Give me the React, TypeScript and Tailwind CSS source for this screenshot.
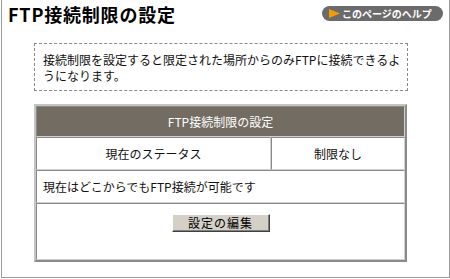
import React from "react";

const font = { fontFamily: '"Noto Sans CJK JP", "Noto Sans", sans-serif' };

export default function App() {
  return (
    <div className="w-[450px] h-[279px] bg-white text-[#111]" style={font}>
      <div className="ml-px w-[449px] h-[278px] border-x border-b border-[#9a9a9a] flex flex-col">
        <div className="flex justify-between items-start h-[43px]">
          <div className="pl-[6px] pt-[5px] text-[18px] leading-[18px] font-bold text-black tracking-[0.8px]">
            FTP接続制限の設定
          </div>
          <div className="mt-[6px] mr-[6px] w-[121px] h-[15px] rounded-full bg-[#6b6b6b] flex items-center pl-[7px] gap-[2px]">
            <svg width="11" height="9" viewBox="0 0 11 9">
              <polygon points="0,0 11,4.5 0,9" fill="#f59a00" />
            </svg>
            <span className="text-[10px] leading-[10px] font-bold text-white whitespace-nowrap">
              このページのヘルプ
            </span>
          </div>
        </div>
        <div className="ml-[32px] w-[374px] h-[48px] border border-dashed border-[#8a8a8a] pl-[8px] pt-[8px] text-[12px] leading-[16px] whitespace-nowrap">
          接続制限を設定すると限定された場所からのみFTPに接続できるよ
          <br />
          うになります。
        </div>
        <div className="mt-[13px] ml-[32px] w-[373px] border-2 border-t-[#c4c4c4] border-l-[#c4c4c4] border-r-[#8a8a8a] border-b-[#8a8a8a] flex flex-col text-[12px] leading-[12px]">
          <div className="h-[31px] bg-[#736c62] border border-t-[#8a8a8a] border-l-[#8a8a8a] border-r-[#d0d0d0] border-b-[#d0d0d0] flex items-center justify-center text-white">
            FTP接続制限の設定
          </div>
          <div className="flex h-[33px]">
            <div className="w-[235px] border border-t-[#8a8a8a] border-l-[#8a8a8a] border-r-[#d0d0d0] border-b-[#d0d0d0] flex items-center justify-center">
              現在のステータス
            </div>
            <div className="flex-1 border border-t-[#8a8a8a] border-l-[#8a8a8a] border-r-[#d0d0d0] border-b-[#d0d0d0] flex items-center justify-center">
              制限なし
            </div>
          </div>
          <div className="h-[33px] border border-t-[#8a8a8a] border-l-[#8a8a8a] border-r-[#d0d0d0] border-b-[#d0d0d0] flex items-center pl-[6px]">
            現在はどこからでもFTP接続が可能です
          </div>
          <div className="h-[57px] border border-t-[#8a8a8a] border-l-[#8a8a8a] border-r-[#d0d0d0] border-b-[#d0d0d0] flex justify-center pt-[10px]">
            <button className="w-[98px] h-[18px] bg-[#d4d0c8] border border-t-white border-l-white border-r-[#404040] border-b-[#404040] shadow-[inset_-1px_-1px_0_#808080] text-[12px] leading-[12px] text-black flex items-center justify-center tracking-[1px]">
              設定の編集
            </button>
          </div>
        </div>
      </div>
    </div>
  );
}
